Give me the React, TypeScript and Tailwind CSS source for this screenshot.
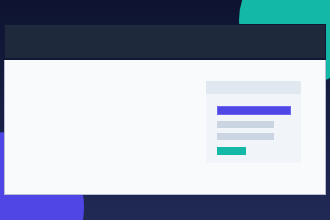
export default function App() {
  return (
    <div className="relative h-[220px] w-[330px] overflow-hidden bg-gradient-to-b from-[#0d1330] to-[#202a55] pt-[24px] px-[4px]">
      {/* decorative blobs */}
      <div className="absolute left-[239px] top-[-44px] h-[128px] w-[128px] rounded-full bg-[#14b8a6]" />
      <div className="absolute left-[-66px] top-[132px] h-[150px] w-[150px] rounded-full bg-[#4f46e5]" />

      <div className="relative flex h-[171px] w-[322px] flex-col">
        <div className="h-[36px] border border-b-2 border-[#121834] bg-[#1e293b]" />
        <div className="flex flex-1 justify-end border border-t-0 border-[#b9bed6] bg-[#f8fafc] bg-[radial-gradient(#e6e9f2_0.6px,transparent_0.7px)] bg-[length:6px_6px] pr-[24px] pt-[21px]">
          <div className="flex h-[82px] w-[95px] flex-col bg-[#f1f5f9]">
            <div className="h-[13px] bg-[#e2e8f0]" />
            <div className="flex flex-col px-[11px] pt-[12px]">
              <div className="h-[9px] w-[74px] border border-[#6d66f0] bg-[#4f46e5]" />
              <div className="mt-[6px] h-[7px] w-[57px] bg-[#cbd5e1]" />
              <div className="mt-[5px] h-[7px] w-[57px] bg-[#cbd5e1]" />
              <div className="mt-[7px] h-[8px] w-[29px] bg-[#14b8a6]" />
            </div>
          </div>
        </div>
      </div>
    </div>
  );
}
